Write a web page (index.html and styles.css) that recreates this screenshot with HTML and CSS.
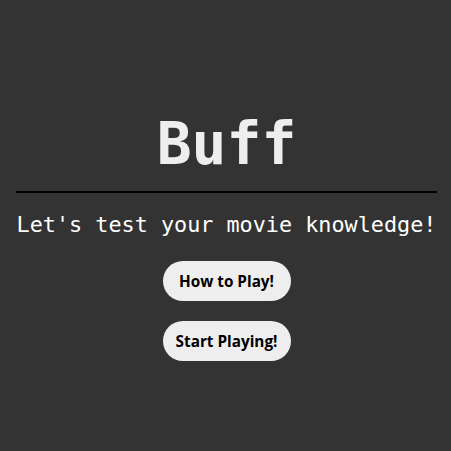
FILE: index.html
```html
<!DOCTYPE html>
<html>
<head>
<meta charset="utf-8">
<link rel="stylesheet" href="styles.css">
</head>
<body>
<main class="page">
  <h1 class="title">Buff</h1>
  <hr class="rule">
  <p class="tagline">Let's test your movie knowledge!</p>
  <div class="actions">
    <button class="btn">How to Play!</button>
    <button class="btn">Start Playing!</button>
  </div>
</main>
</body>
</html>
```
FILE: styles.css
```css
html, body {
  margin: 0;
  padding: 0;
  background: #333333;
  height: 100%;
}
.page {
  display: flex;
  flex-direction: column;
  align-items: center;
  padding: 104px 14px 0 16px;
}
.title {
  margin: 0;
  font-family: "DejaVu Sans Mono", monospace;
  font-weight: bold;
  font-size: 58px;
  line-height: 80px;
  color: #eeeeee;
}
.rule {
  align-self: stretch;
  margin: 7px 0 0 0;
  border: 0;
  height: 2px;
  background: #000000;
}
.tagline {
  margin: 17px 0 0 0;
  font-family: "DejaVu Sans Mono", monospace;
  font-size: 21.8px;
  line-height: 30px;
  color: #ffffff;
}
.actions {
  display: flex;
  flex-direction: column;
  gap: 20px;
  margin-top: 21px;
}
.btn {
  width: 128px;
  height: 40px;
  border: 0;
  border-radius: 20px;
  background: #eeeeee;
  color: #000000;
  font-family: "Open Sans", sans-serif;
  font-weight: bold;
  font-size: 15.3px;
  padding: 0;
}
```
